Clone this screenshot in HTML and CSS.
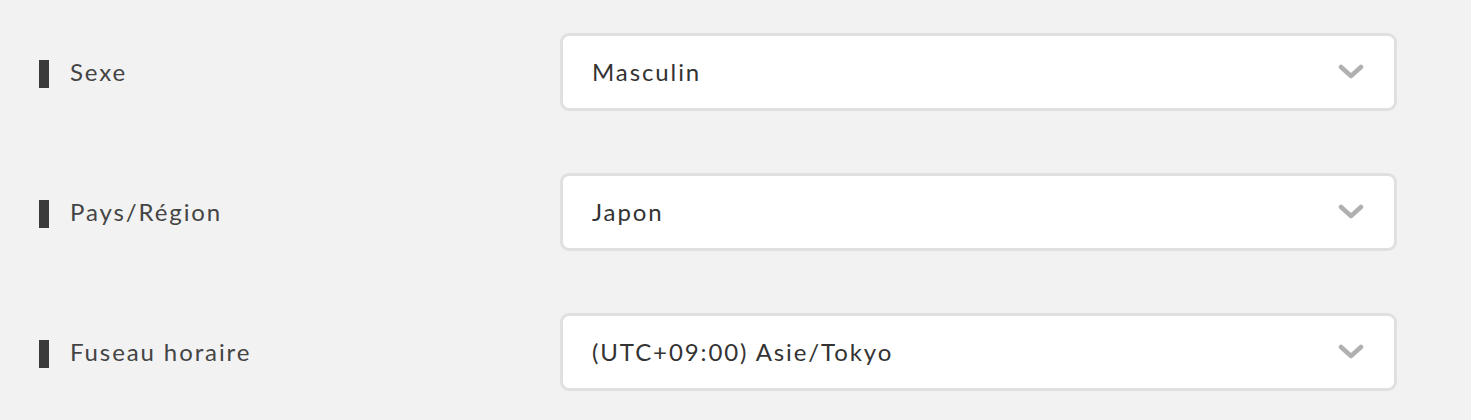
FILE: index.html
```html
<!DOCTYPE html>
<html lang="fr">
<head>
<meta charset="utf-8">
<link rel="stylesheet" href="styles.css">
</head>
<body>
<div class="form">
  <div class="row">
    <div class="label"><span class="mark"></span><span class="label-text">Sexe</span></div>
    <div class="select"><span class="value">Masculin</span>
      <svg class="chev" width="26" height="16" viewBox="0 0 26 16"><path d="M3 3 L13 12 L23 3" fill="none" stroke="#b0b0b0" stroke-width="4.5" stroke-linecap="round" stroke-linejoin="round"/></svg>
    </div>
  </div>
  <div class="row">
    <div class="label"><span class="mark"></span><span class="label-text">Pays/Région</span></div>
    <div class="select"><span class="value">Japon</span>
      <svg class="chev" width="26" height="16" viewBox="0 0 26 16"><path d="M3 3 L13 12 L23 3" fill="none" stroke="#b0b0b0" stroke-width="4.5" stroke-linecap="round" stroke-linejoin="round"/></svg>
    </div>
  </div>
  <div class="row">
    <div class="label"><span class="mark"></span><span class="label-text">Fuseau horaire</span></div>
    <div class="select"><span class="value">(UTC+09:00) Asie/Tokyo</span>
      <svg class="chev" width="26" height="16" viewBox="0 0 26 16"><path d="M3 3 L13 12 L23 3" fill="none" stroke="#b0b0b0" stroke-width="4.5" stroke-linecap="round" stroke-linejoin="round"/></svg>
    </div>
  </div>
</div>
</body>
</html>
```
FILE: styles.css
```css
html, body {
  margin: 0;
  padding: 0;
  background: #f2f2f2;
  font-family: Lato, "Noto Sans", sans-serif;
}
.form {
  padding-top: 33px;
  display: flex;
  flex-direction: column;
  gap: 62px;
}
.row {
  display: flex;
  align-items: center;
  height: 78px;
}
.label {
  width: 560px;
  box-sizing: border-box;
  padding-left: 39px;
  display: flex;
  align-items: center;
  margin-top: 3px;
}
.mark {
  width: 10px;
  height: 28px;
  background: #3a3a3a;
  margin-right: 21px;
}
.label-text {
  font-size: 24px;
  letter-spacing: 1.9px;
  color: #444;
  margin-top: -5px;
}
.select {
  width: 837px;
  height: 78px;
  box-sizing: border-box;
  background: #fff;
  border: 3px solid #e0e0e0;
  border-radius: 9px;
  display: flex;
  align-items: center;
  justify-content: space-between;
  padding: 0 30px 0 29px;
}
.value {
  font-size: 24px;
  letter-spacing: 1.9px;
  color: #333;
  margin-top: -2px;
}
.chev {
  display: block;
}
```
